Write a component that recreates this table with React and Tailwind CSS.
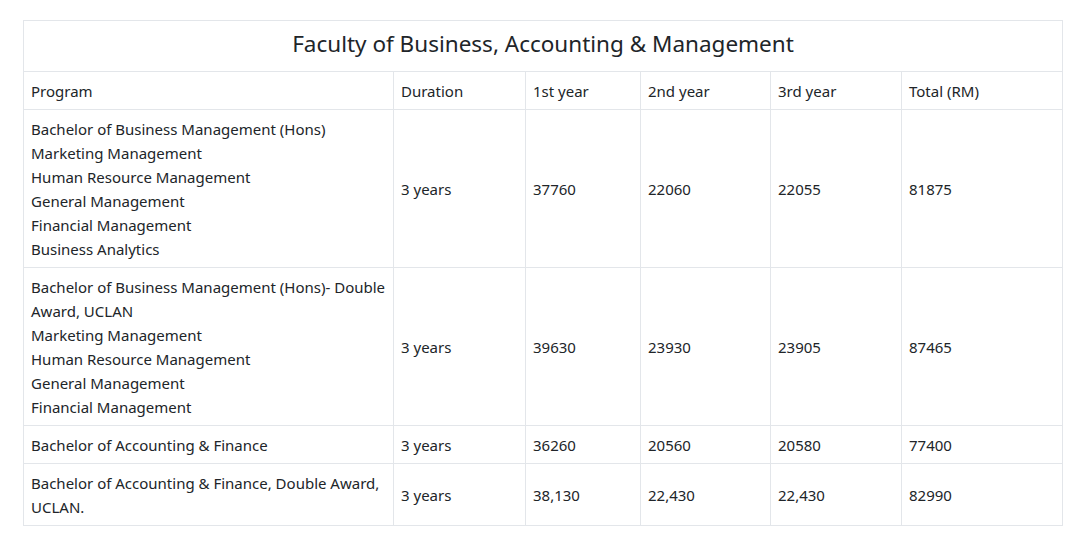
import React from 'react';

const rows = [
  {
    program: [
      'Bachelor of Business Management (Hons)',
      'Marketing Management',
      'Human Resource Management',
      'General Management',
      'Financial Management',
      'Business Analytics',
    ],
    fees: ['37760', '22060', '22055', '81875'],
  },
  {
    program: [
      'Bachelor of Business Management (Hons)- Double',
      'Award, UCLAN',
      'Marketing Management',
      'Human Resource Management',
      'General Management',
      'Financial Management',
    ],
    fees: ['39630', '23930', '23905', '87465'],
  },
  {
    program: ['Bachelor of Accounting & Finance'],
    fees: ['36260', '20560', '20580', '77400'],
  },
  {
    program: ['Bachelor of Accounting & Finance, Double Award,', 'UCLAN.'],
    fees: ['38,130', '22,430', '22,430', '82990'],
  },
];

const cell = 'border border-[#e3e6ea] pl-[7px] pr-2 py-[6.5px] align-middle whitespace-nowrap';

const App = () => {
  return (
    <div
      className="bg-white w-[1085px] h-[541px] pt-5 pl-[23px] text-[#212529]"
      style={{ fontFamily: '"Noto Sans", "Open Sans", sans-serif' }}
    >
      <table className="table-fixed border-collapse w-[1040px] text-[15px] leading-6">
        <colgroup>
          <col className="w-[370px]" />
          <col className="w-[132px]" />
          <col className="w-[115px]" />
          <col className="w-[130px]" />
          <col className="w-[131px]" />
          <col className="w-[161px]" />
        </colgroup>
        <thead>
          <tr>
            <th colSpan={6} className="border border-[#e3e6ea] h-[51px] pb-[5px] text-center font-normal text-[22.5px] leading-7">
              Faculty of Business, Accounting &amp; Management
            </th>
          </tr>
          <tr>
            {['Program', 'Duration', '1st year', '2nd year', '3rd year', 'Total (RM)'].map((h) => (
              <th key={h} className={`${cell} text-left font-normal`}>
                {h}
              </th>
            ))}
          </tr>
        </thead>
        <tbody>
          {rows.map((row, i) => (
            <tr key={i}>
              <td className={cell}>
                {row.program.map((line) => (
                  <div key={line}>{line}</div>
                ))}
              </td>
              <td className={cell}>3 years</td>
              {row.fees.map((f, j) => (
                <td key={j} className={cell}>
                  {f}
                </td>
              ))}
            </tr>
          ))}
        </tbody>
      </table>
    </div>
  );
};

export default App;
